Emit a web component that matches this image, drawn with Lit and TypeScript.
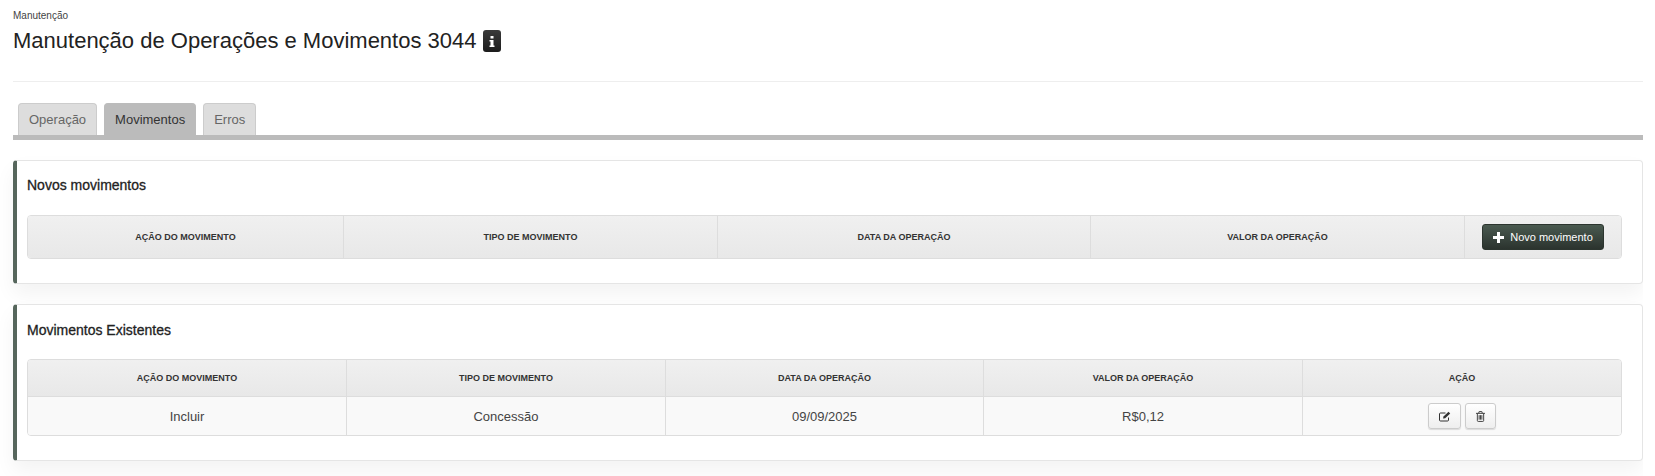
import { LitElement, html, css } from 'lit';
import { customElement } from 'lit/decorators.js';

const NEW_COLS = ['AÇÃO DO MOVIMENTO', 'TIPO DE MOVIMENTO', 'DATA DA OPERAÇÃO', 'VALOR DA OPERAÇÃO'];
const EXISTING_COLS = [...NEW_COLS, 'AÇÃO'];
const ROW = ['Incluir', 'Concessão', '09/09/2025', 'R$0,12'];

@customElement('app-root')
export class AppRoot extends LitElement {
  static styles = css`
    :host {
      display: block;
      height: 476px;
      overflow: hidden;
      box-sizing: border-box;
      padding: 0 12px 0 13px;
      background: #fff;
      font-family: "Liberation Sans", Arial, sans-serif;
      color: #333;
    }
    .crumb {
      padding-top: 10px;
      font-size: 10px;
      line-height: 11px;
      color: #444;
    }
    .title-row {
      display: flex;
      align-items: center;
      gap: 6px;
      margin-top: 5px;
      height: 30px;
    }
    h1 {
      margin: 0;
      font-size: 22px;
      font-weight: 400;
      line-height: 30px;
      color: #222;
    }
    .info {
      width: 18px;
      height: 22px;
      border-radius: 3px;
      background: linear-gradient(#3a3a3a, #1c1c1c);
      display: flex;
      align-items: center;
      justify-content: center;
    }
    hr {
      margin: 25px 0 0;
      border: 0;
      border-top: 1px solid #eee;
    }
    .tabs {
      display: flex;
      gap: 7px;
      margin-top: 21px;
      padding-left: 5px;
      height: 32px;
      border-bottom: 5px solid #bbb;
    }
    .tab {
      box-sizing: border-box;
      height: 32px;
      padding: 0 10px;
      display: flex;
      align-items: center;
      background: #ddd;
      border: 1px solid #ccc;
      border-bottom: 0;
      border-radius: 4px 4px 0 0;
      font-size: 13px;
      color: #666;
    }
    .tab.active {
      background: #bbb;
      border-color: #bbb;
      color: #333;
    }
    .card {
      box-sizing: border-box;
      background: #fff;
      border: 1px solid #e5e5e5;
      border-left: 4px solid #56665c;
      border-radius: 4px;
      box-shadow: 0 10px 20px rgba(0, 0, 0, 0.05);
      clip-path: inset(-30px 0 -30px -20px);
      padding: 0 20px 0 10px;
    }
    .card.new {
      margin-top: 20px;
      height: 124px;
    }
    .card.existing {
      margin-top: 20px;
      height: 157px;
    }
    h2 {
      margin: 0;
      padding-top: 16px;
      font-size: 14px;
      line-height: 16px;
      font-weight: 400;
      color: #222;
      -webkit-text-stroke: 0.3px #222;
    }
    .card.new h2 { padding-bottom: 22px; }
    .card.existing h2 { padding-top: 17px; padding-bottom: 21px; }
    .grid {
      border: 1px solid #ddd;
      border-radius: 4px;
      overflow: hidden;
      display: grid;
    }
    .grid.new { grid-template-columns: 315px 374px 373px 374px 1fr; }
    .grid.existing { grid-template-columns: 318px 319px 318px 319px 1fr; }
    .cell {
      display: flex;
      align-items: center;
      justify-content: center;
      border-left: 1px solid #ddd;
    }
    .cell:first-child, .first { border-left: 0; }
    .head {
      height: 42px;
      background: linear-gradient(#f0f0f0, #e8e8e8);
      font-size: 9px;
      font-weight: 700;
      color: #333;
    }
    .grid.existing .head {
      height: 36px;
      border-bottom: 1px solid #ddd;
    }
    .body {
      height: 38px;
      background: #f9f9f9;
      font-size: 13px;
      color: #444;
    }
    .btn-new {
      box-sizing: border-box;
      width: 122px;
      height: 26px;
      border: 1px solid #2c352f;
      border-radius: 3px;
      background: linear-gradient(#4a5a50, #2b332e);
      color: #fff;
      font: 11px "Liberation Sans", Arial, sans-serif;
      display: flex;
      align-items: center;
      justify-content: center;
      gap: 6px;
      padding: 0;
    }
    .actions { gap: 4px; }
    .btn-icon {
      box-sizing: border-box;
      height: 26px;
      border: 1px solid #ccc;
      border-radius: 3px;
      background: linear-gradient(#fff, #eee);
      box-shadow: 0 1px 1px rgba(0, 0, 0, 0.12);
      display: flex;
      align-items: center;
      justify-content: center;
      padding: 0;
    }
    .btn-icon.edit { width: 33px; }
    .btn-icon.del { width: 31px; }
  `;

  private _heads(cols: string[]) {
    return cols.map(c => html`<div class="cell head">${c}</div>`);
  }

  render() {
    return html`
      <div class="crumb">Manutenção</div>
      <div class="title-row">
        <h1>Manutenção de Operações e Movimentos 3044</h1>
        <span class="info">
          <svg width="6" height="11" viewBox="0 0 6 11" fill="#fff">
            <rect x="1.5" y="0" width="3" height="2.5"></rect>
            <path d="M0.5 4h4v5.5h1V11H0.5V9.5h1V5.5h-1z"></path>
          </svg>
        </span>
      </div>
      <hr />
      <div class="tabs">
        <div class="tab">Operação</div>
        <div class="tab active">Movimentos</div>
        <div class="tab">Erros</div>
      </div>

      <section class="card new">
        <h2>Novos movimentos</h2>
        <div class="grid new">
          ${this._heads(NEW_COLS)}
          <div class="cell head">
            <button class="btn-new">
              <svg width="11" height="11" viewBox="0 0 11 11" fill="#fff">
                <path d="M4 0h3v4h4v3H7v4H4V7H0V4h4z"></path>
              </svg>
              Novo movimento
            </button>
          </div>
        </div>
      </section>

      <section class="card existing">
        <h2>Movimentos Existentes</h2>
        <div class="grid existing">
          ${this._heads(EXISTING_COLS)}
          ${ROW.map((v, i) => html`<div class="cell body ${i === 0 ? 'first' : ''}">${v}</div>`)}
          <div class="cell body actions">
            <button class="btn-icon edit">
              <svg width="12" height="11" viewBox="0 0 12 11" fill="none" stroke="#333">
                <path d="M9.5 6.5v2.5a1 1 0 0 1-1 1h-7a1 1 0 0 1-1-1v-6a1 1 0 0 1 1-1h5"></path>
                <path d="M4 7.5 L4.5 5.5 L9.5 0.8 L11.2 2.5 L6.2 7.2 Z" fill="#333" stroke="none"></path>
              </svg>
            </button>
            <button class="btn-icon del">
              <svg width="9" height="11" viewBox="0 0 10 12" fill="none" stroke="#333">
                <path d="M0 2.5h10M3.2 2.5V1a.5.5 0 0 1 .5-.5h2.6a.5.5 0 0 1 .5.5v1.5"></path>
                <path d="M1.5 2.5v8a1 1 0 0 0 1 1h5a1 1 0 0 0 1-1v-8M3.5 4.5v5M5 4.5v5M6.5 4.5v5"></path>
              </svg>
            </button>
          </div>
        </div>
      </section>
    `;
  }
}
